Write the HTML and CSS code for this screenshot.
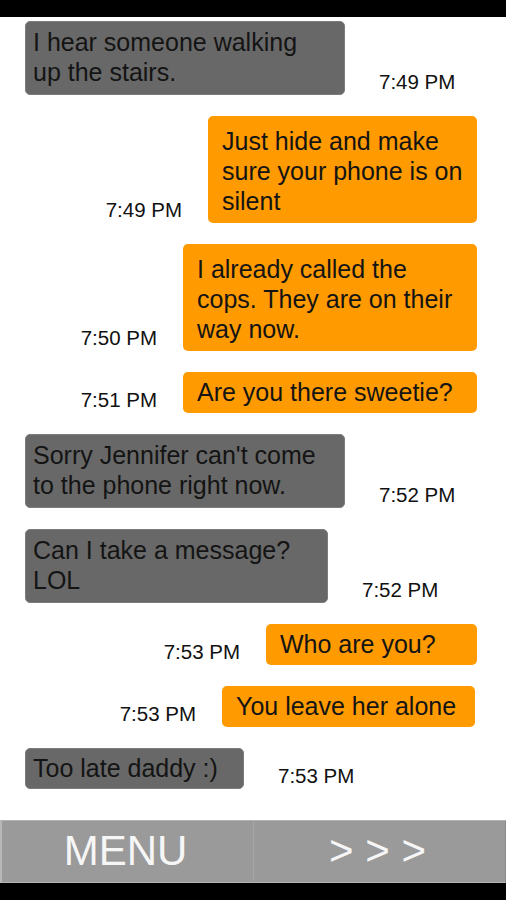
FILE: index.html
```html
<!DOCTYPE html>
<html lang="en">
<head>
    <meta charset="UTF-8">
    <meta name="viewport" content="width=device-width, initial-scale=1.0">
    <title>Chat</title>
    <link rel="stylesheet" href="styles.css">
</head>
<body>
    <div class="screen">
        <div class="chat">
            <div class="row received">
                <div class="bubble gray two-line w-320">I hear someone walking up the stairs.</div>
                <span class="time">7:49 PM</span>
            </div>

            <div class="row sent">
                <span class="time">7:49 PM</span>
                <div class="bubble orange three-line w-269">Just hide and make sure your phone is on silent</div>
            </div>

            <div class="row sent">
                <span class="time">7:50 PM</span>
                <div class="bubble orange three-line w-294">I already called the cops. They are on their way now.</div>
            </div>

            <div class="row sent">
                <span class="time">7:51 PM</span>
                <div class="bubble orange w-294">Are you there sweetie?</div>
            </div>

            <div class="row received">
                <div class="bubble gray two-line w-320">Sorry Jennifer can't come to the phone right now.</div>
                <span class="time">7:52 PM</span>
            </div>

            <div class="row received">
                <div class="bubble gray two-line w-303">Can I take a message? LOL</div>
                <span class="time">7:52 PM</span>
            </div>

            <div class="row sent">
                <span class="time">7:53 PM</span>
                <div class="bubble orange w-211">Who are you?</div>
            </div>

            <div class="row sent inset">
                <span class="time">7:53 PM</span>
                <div class="bubble orange w-253">You leave her alone</div>
            </div>

            <div class="row received">
                <div class="bubble gray w-219">Too late daddy :)</div>
                <span class="time">7:53 PM</span>
            </div>
        </div>

        <div class="menu-bar">
            <button type="button" class="menu-btn menu-left">MENU</button>
            <button type="button" class="menu-btn menu-right">&gt; &gt; &gt;</button>
        </div>
    </div>
</body>
</html>
```

FILE: styles.css
```css
body {
    margin: 0;
    padding: 0;
    background-color: #000;
    font-family: 'Liberation Sans', Arial, sans-serif;
    color: #111;
}

.screen {
    margin-top: 17px;
    height: 866px;
    display: flex;
    flex-direction: column;
    background: #fff;
}

.chat {
    flex: 1;
    display: flex;
    flex-direction: column;
    gap: 21px;
    padding: 4px 29px 0 25px;
}

.row {
    display: flex;
}

.received {
    justify-content: flex-start;
    gap: 34px;
}

.sent {
    justify-content: flex-end;
    gap: 26px;
}

.sent.inset {
    margin-right: 2px;
}

/* bubbles: 30px lines, a little more room on multi-line ones */
.bubble {
    box-sizing: border-box;
    font-size: 25px;
    line-height: 30px;
    padding: 5px 10px 6px 14px;
    border-radius: 5px;
    color: #141414;
}

.gray {
    background-color: #686868;
    border: 1px solid #7c7c7c;
    padding: 4px 18px 5px 7px;
}

.orange {
    background-color: #ff9a00;
}

.two-line {
    padding-top: 6px;
    padding-bottom: 8px;
}

.gray.two-line {
    padding-top: 5px;
    padding-bottom: 7px;
}

.three-line {
    padding-top: 10px;
    padding-bottom: 7px;
}

.w-320 { width: 320px; }
.w-303 { width: 303px; }
.w-294 { width: 294px; }
.w-269 { width: 269px; }
.w-253 { width: 253px; }
.w-219 { width: 219px; }
.w-211 { width: 211px; }

.time {
    align-self: flex-end;
    font-size: 20.5px;
    line-height: 23px;
    margin-bottom: 2px;
    white-space: nowrap;
    color: #111;
}

.menu-bar {
    display: flex;
    height: 63px;
}

.menu-btn {
    flex: 1;
    margin: 0;
    padding: 0 4px 2px 0;
    background-color: #9a9a9a;
    border: none;
    border-top: 1px solid #b3b3b3;
    border-bottom: 1px solid #b3b3b3;
    font-family: 'Liberation Sans', Arial, sans-serif;
    font-size: 42px;
    color: #f6f6f6;
    cursor: pointer;
}

.menu-left {
    border-left: 2px solid #b8b8b8;
}

.menu-right {
    border-left: 1px solid #a6a6a6;
    border-right: 1px solid #8a8a8a;
}
```
